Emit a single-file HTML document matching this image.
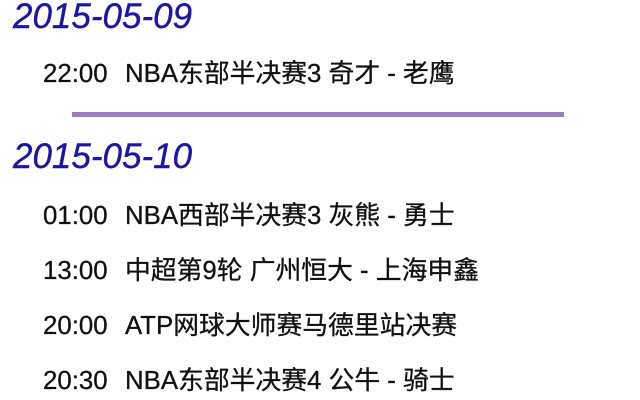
<!DOCTYPE html>
<html><head><meta charset="utf-8"><style>
body{margin:0;width:640px;height:400px;background:#fff;overflow:hidden;position:relative;font-family:"Liberation Sans","WenQuanYi Zen Hei","Noto Sans CJK SC",sans-serif}
.h{position:absolute;left:13px;font-style:italic;color:#1a17a6;font-size:35px;line-height:1;white-space:nowrap;-webkit-text-stroke:0.4px #1a17a6}
.r{position:absolute;left:43px;font-size:25.8px;color:#111;line-height:1;white-space:nowrap;-webkit-text-stroke:0.3px #111}
.r span{display:inline-block;width:82px}
.line{position:absolute;left:72px;top:112px;width:492px;height:5px;background:#9a7dbf}
</style></head><body>
<div class="h" style="top:-1px">2015-05-09</div>
<div class="r" style="top:62px"><span>22:00</span>NBA东部半决赛3 奇才 - 老鹰</div>
<div class="line"></div>
<div class="h" style="top:139px">2015-05-10</div>
<div class="r" style="top:204px"><span>01:00</span>NBA西部半决赛3 灰熊 - 勇士</div>
<div class="r" style="top:259px"><span>13:00</span>中超第9轮 广州恒大 - 上海申鑫</div>
<div class="r" style="top:314px"><span>20:00</span>ATP网球大师赛马德里站决赛</div>
<div class="r" style="top:369px"><span>20:30</span>NBA东部半决赛4 公牛 - 骑士</div>
</body></html>
